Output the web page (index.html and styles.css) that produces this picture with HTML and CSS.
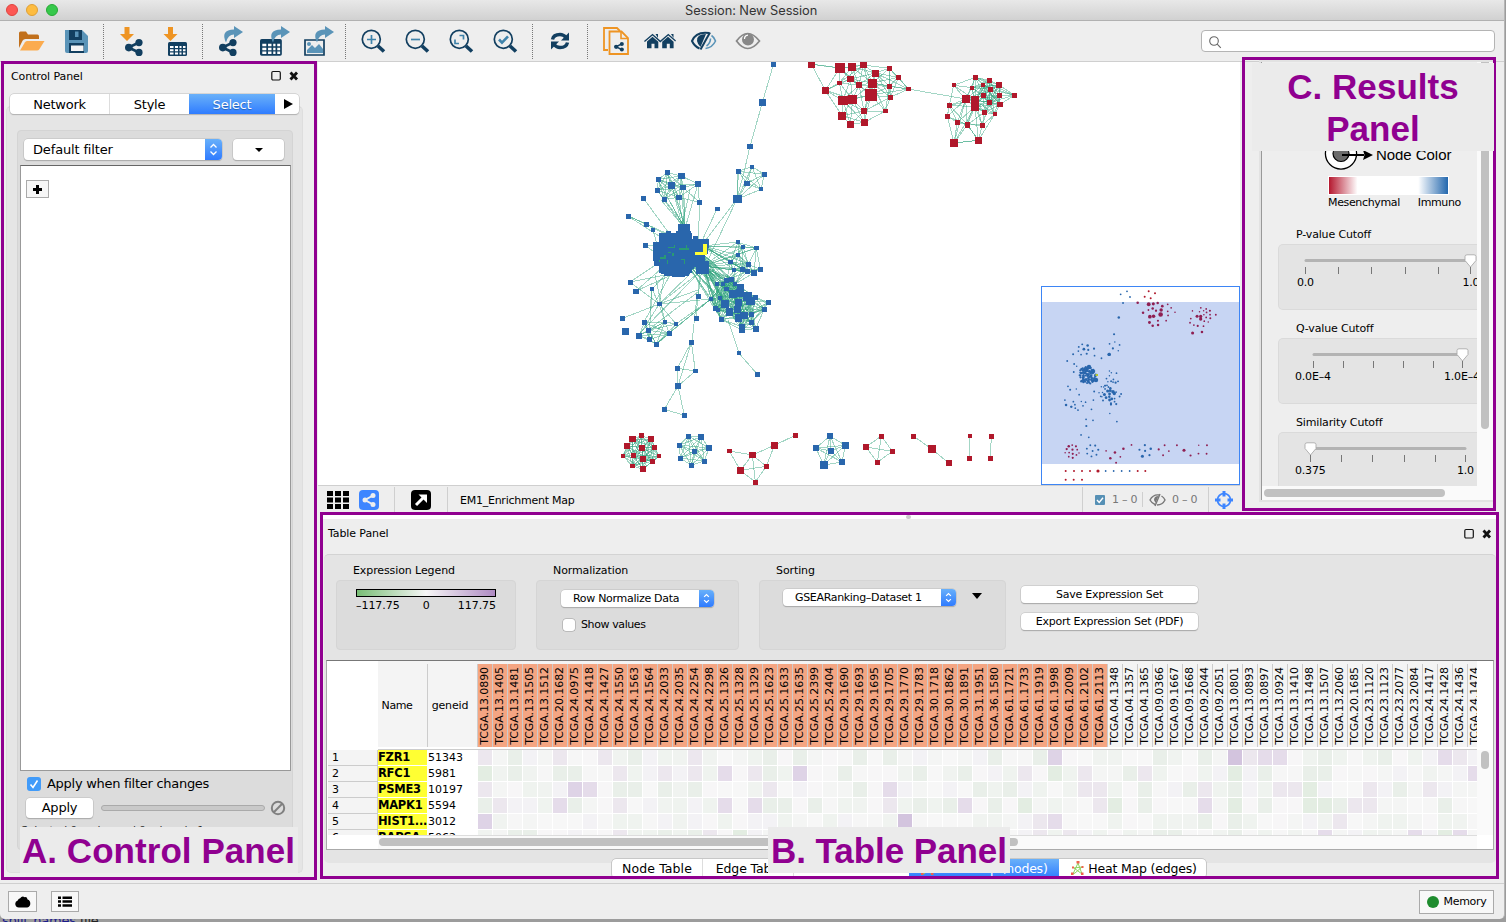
FILE: index.html
```html
<!DOCTYPE html>
<html lang="en">
<head>
<meta charset="utf-8">
<title>Session: New Session</title>
<link rel="stylesheet" href="styles.css">
</head>
<body>
<div class="window">
  <header class="titlebar">
    <i class="light red"></i><i class="light amber"></i><i class="light green"></i>
    <span class="title">Session: New Session</span>
  </header>

  <nav class="toolbar">
    <svg class="tool" viewBox="9 21 44 40"><path d="M19 48V33q0-1.500 1.500-1.500h5.500l2 3h9.500q1.500 0 1.500 2V39H25.500q-2 0-3 1.800z" fill="#c1701c"/><path d="M20 50.500l5-8.300q.8-1.200 2.400-1.200H44.500l-5.300 8.400q-.7 1.100-2.200 1.100z" fill="#fbab4e"/></svg>
    <svg class="tool" viewBox="54 21 44 40"><path d="M65 30h17l6 6v15q0 2-2 2H67q-2 0-2-2z" fill="#5a94b8"/><path d="M69 30h13v10H69zM69 43h15v10H69z" fill="#123f60"/><path d="M75 31.500h3.500V37H75z" fill="#5a94b8"/><path d="M71 45.500h12.500V51H71z" fill="#f5f5f5"/></svg>
    <i class="sep"></i>
    <svg class="tool" viewBox="109 21 44 40"><use href="#down" x="120" y="27"/><use href="#share" x="125" y="39"/></svg>
    <svg class="tool" viewBox="153 21 44 40"><use href="#down" x="163.500" y="27"/><use href="#grid" x="168" y="42"/></svg>
    <i class="sep"></i>
    <svg class="tool" viewBox="207 21 44 40"><use href="#share" x="218" y="39"/><use href="#curve" x="222" y="26"/></svg>
    <svg class="tool" viewBox="251 21 44 40"><use href="#grid" transform="translate(259 39) scale(1.150 1.200)"/><use href="#curve" x="269" y="26"/></svg>
    <svg class="tool" viewBox="295 21 44 40"><path d="M304 40h19v15h-19z" fill="#eee" stroke="#123f60" stroke-width="1.700"/><path d="M306 53v-3l5-5 3 3 4-4 4 5v4z" fill="#5a94b8"/><circle cx="308" cy="44" r="2" fill="#5a94b8"/><use href="#curve" x="313" y="26"/></svg>
    <i class="sep"></i>
    <svg class="tool" viewBox="351 21 44 40"><use href="#lens" x="361" y="29"/><path d="M367 39.500h9M371.500 35v9" class="lens-mark"/></svg>
    <svg class="tool" viewBox="395 21 44 40"><use href="#lens" x="405" y="29"/><path d="M411 39.500h9" class="lens-mark"/></svg>
    <svg class="tool" viewBox="439 21 44 40"><use href="#lens" x="449" y="29"/><path d="M459.500 35.500h4v4M459 43.500h-4v-4" class="lens-mark"/></svg>
    <svg class="tool" viewBox="483 21 44 40"><use href="#lens" x="493" y="29"/><path d="M499 39.500l3 3.200 6-6.400" class="lens-mark bold"/></svg>
    <i class="sep"></i>
    <svg class="tool" viewBox="538 21 44 40"><path d="M552.500 39.500q1-5 7.500-5 3.500 0 6 3" fill="none" stroke="#123f60" stroke-width="3.400"/><path d="M569 32.500v8h-8z" fill="#123f60"/><path d="M567.500 42.500q-1 5-7.500 5-3.500 0-6-3" fill="none" stroke="#123f60" stroke-width="3.400"/><path d="M551 49.500v-8h8z" fill="#123f60"/></svg>
    <i class="sep"></i>
    <svg class="tool" viewBox="592 21 44 40"><path d="M607 50h-4V28h13l3 3" fill="none" stroke="#ee9423" stroke-width="1.800"/><path d="M608.500 31.500h12l6.500 6.500v16h-18.500z" fill="#eee" stroke="#ee9423" stroke-width="1.800"/><path d="M620 32v6.500h7" fill="none" stroke="#ee9423" stroke-width="1.600"/><use href="#share" transform="translate(613 42) scale(.56)"/></svg>
    <svg class="tool" viewBox="636 21 44 40"><g fill="#123f60"><path d="M643 41l8.500-7.300 7.800 6.700 8-6.700 7.700 6.700-.8 1-6.900-5.800-8 6.800-7.800-6.800-7.600 6.400z"/><path d="M646 41.500l5.500-4.700 5.800 4.900v6.500h-3.800v-4.500h-3v4.500H646zM661.200 41.700l5.800-4.900 5.600 4.900v6.500h-3.800v-4.500h-3v4.500h-4.600zM654.500 34h2.500v4zM670 34h2.500v4z"/></g></svg>
    <svg class="tool" viewBox="680 21 44 40"><path d="M708 33q-13-1.800-17 8 2.500 5.500 7.500 7.500" fill="none" stroke="#123f60" stroke-width="2"/><path d="M705 34q-9.500 0-9 7 .5 3 3.500 6z" fill="#123f60"/><path d="M709 32.500l-9.500 17" stroke="#123f60" stroke-width="2"/><path d="M710.500 35.500q3 2 4 5.500-3 6.500-10 7.500M709.500 38.500q0 4.500-4 7.500" fill="none" stroke="#5a94b8" stroke-width="1.600"/></svg>
    <svg class="tool" viewBox="724 21 44 40"><path d="M735.500 41q11-15 23 0-12 15-23 0z" fill="none" stroke="#888" stroke-width="1.700"/><circle cx="747" cy="39.500" r="6" fill="#888"/><path d="M743.500 39q0-3.500 3.500-3.800" fill="none" stroke="#fff" stroke-width="1.200"/></svg>
    <div class="search"><svg width="14" height="14" viewBox="0 0 14 14"><circle cx="6" cy="6" r="4.300"/><path d="M9.200 9.200l3.600 3.600"/></svg></div>
  </nav>

  <div class="main">
    <section class="control">
      <div class="panel-title"><span>Control Panel</span><svg class="panel-icons" width="28" height="12" viewBox="0 0 28 12"><rect x=".8" y="1.500" width="8.500" height="8.500" rx="1.200"/><path d="M19.500 2.500l6.500 7M26 2.500l-6.500 7"/></svg></div>
      <div class="tabs">
        <span class="tab net">Network</span><span class="tab sty">Style</span><span class="tab sel">Select</span><span class="tab more"><i class="tri-right"></i></span>
      </div>
      <div class="control-outer">
        <div class="control-inner">
          <div class="filter-row">
            <div class="combo">Default filter<i class="steps"><svg viewBox="0 0 17 21"><path d="M5.500 8.500l3-3 3 3M5.500 12.500l3 3 3-3"/></svg></i></div>
            <div class="drop"><i class="tri-down small"></i></div>
          </div>
          <div class="filter-list"><span class="plus"></span></div>
          <div class="check-row"><span class="check on"><svg viewBox="0 0 14 14"><path d="M3.500 7.500l2.500 3 4.500-7"/></svg></span>Apply when filter changes</div>
          <div class="apply-row"><span class="apply">Apply</span><i class="progress"></i><svg width="16" height="16" viewBox="0 0 16 16"><circle cx="8" cy="8" r="6.200"/><path d="M3.800 12.200l8.400-8.400"/></svg></div>
          <div class="selected-info">Selected 0 nodes and 0 edges in 1ms</div>
        </div>
      </div>
    </section>

    <div class="right">
      <div class="upper">
        <section class="netview">
          <svg class="canvas" id="net" viewBox="318 62 922 423"></svg>
          <svg class="minimap" id="mini" viewBox="1041 286 199 199"></svg>
          <div class="netbar">
            <svg class="grid9" width="23" height="18" viewBox="0 0 23 18"><path d="M0 0h6v5H0zM8 0h6v5H8zM16 0h6v5h-6zM0 6.500h6v5H0zM8 6.500h6v5H8zM16 6.500h6v5h-6zM0 13h6v5H0zM8 13h6v5H8zM16 13h6v5h-6z"/></svg>
            <svg class="share-btn" width="20" height="20" viewBox="0 0 20 20"><rect width="20" height="20" rx="4" fill="#3d85ff"/><path d="M14 5.500L6 10l8 4.500" fill="none" stroke="#eee" stroke-width="2"/><g fill="#eee"><circle cx="14" cy="5.500" r="2.500"/><circle cx="6" cy="10" r="2.500"/><circle cx="14" cy="14.500" r="2.500"/></g></svg>
            <i class="bar-sep a"></i>
            <svg class="detach" width="20" height="20" viewBox="0 0 20 20"><rect width="20" height="20" rx="4"/><path d="M5 15l8-8" stroke="#fff" stroke-width="3"/><path d="M7.500 4.500h8.500v8.500z" fill="#fff"/></svg>
            <i class="bar-sep b"></i>
            <span class="netname">EM1_Enrichment Map</span>
            <i class="bar-sep c"></i>
            <span class="minicheck"><svg viewBox="0 0 10 10"><path d="M2 5l2.200 2.500L8 2.800"/></svg></span>
            <span class="count">1 – 0</span>
            <i class="bar-sep short"></i>
            <svg class="hidden-eye" width="17" height="14" viewBox="0 0 17 14"><path d="M10.500 2Q4 1 1 7q2 3.500 5 4.500M12.500 3q2.500 1.500 3.500 4-2.500 5-8 5M11 1L6 13" fill="none" stroke="#777" stroke-width="1.400"/><path d="M9.500 3Q5 3 5 7l1.500 3z" fill="#777"/></svg>
            <span class="count second">0 – 0</span>
            <i class="bar-sep d"></i>
            <svg class="target" width="20" height="20" viewBox="0 0 20 20"><circle cx="10" cy="10" r="6.500" fill="none" stroke="#3d85ff" stroke-width="1.700"/><path d="M10 1v5.500M10 13.500V19M1 10h5.500M13.500 10H19" stroke="#3d85ff" stroke-width="3"/></svg>
          </div>
        </section>

        <section class="results">
          <div class="results-pane">
            <div class="results-view">
              <div class="legend">
                <svg width="52" height="34" viewBox="1324 137 52 34"><circle cx="1341" cy="153.500" r="15.600" fill="#fff" stroke="#000" stroke-width="1.300"/><circle cx="1341" cy="153.500" r="8" fill="#6b6b6b" stroke="#000" stroke-width="1.200"/><path d="M1342 155h22" stroke="#000" stroke-width="2"/><path d="M1363 150l10 5-10 5 1.500-5z"/></svg><span class="node-color">Node Color</span>
              </div>
              <div class="ramp"></div>
              <div class="ramp-labels"><span>Mesenchymal</span><span>Immuno</span></div>
              <div class="cut"><h4>P-value Cutoff</h4><svg width="198" height="64" viewBox="1279 244 198 64"><path class="track" d="M1306 259.500h164"/><path class="ticks" d="M1305.500 266v7M1338.500 266v7M1371.500 266v7M1405.500 266v7M1438.500 266v7M1470.500 266v7"/><use href="#knob" x="1464" y="253"/><text x="1297" y="285">0.0</text><text x="1462.500" y="285">1.0</text></svg></div>
              <div class="cut"><h4>Q-value Cutoff</h4><svg width="198" height="64" viewBox="1279 244 198 64"><path class="track" d="M1314 259.500h148"/><path class="ticks" d="M1313.500 266v7M1343.500 266v7M1373.500 266v7M1403.500 266v7M1433.500 266v7M1462.500 266v7"/><use href="#knob" x="1456" y="253"/><text x="1295" y="285">0.0E–4</text><text x="1444" y="285">1.0E–4</text></svg></div>
              <div class="cut"><h4>Similarity Cutoff</h4><svg width="198" height="64" viewBox="1279 244 198 64"><path class="track" d="M1312 259.500h153"/><path class="ticks" d="M1310.500 266v7M1341.500 266v7M1372.500 266v7M1404.500 266v7M1435.500 266v7M1465.500 266v7"/><use href="#knob" x="1304" y="253"/><text x="1295" y="285">0.375</text><text x="1457" y="285">1.0</text></svg></div>
            </div>
            <div class="vscroll"><i></i></div>
            <div class="hscroll"><i></i></div>
          </div>
        </section>
      </div>

      <section class="table-panel">
        <div class="splitter"><i></i></div>
        <div class="panel-title wide"><span>Table Panel</span><svg class="panel-icons" width="28" height="12" viewBox="0 0 28 12"><rect x=".8" y="1.500" width="8.500" height="8.500" rx="1.200"/><path d="M19.500 2.500l6.500 7M26 2.500l-6.500 7"/></svg></div>
        <div class="table-outer">
          <div class="options">
            <div class="opt expr"><h4>Expression Legend</h4><div class="opt-box"><i class="expr-bar"></i><div class="expr-labels"><span>–117.75</span><span>0</span><span>117.75</span></div></div></div>
            <div class="opt norm"><h4>Normalization</h4><div class="opt-box"><div class="combo mini">Row Normalize Data<i class="steps"><svg viewBox="0 0 15 18"><path d="M5 7.300l2.500-2.500 2.500 2.500M5 10.700l2.500 2.500 2.500-2.500"/></svg></i></div><div class="show"><span class="check"></span>Show values</div></div></div>
            <div class="opt sort"><h4>Sorting</h4><div class="opt-box"><div class="combo mini">GSEARanking–Dataset 1<i class="steps"><svg viewBox="0 0 15 18"><path d="M5 7.300l2.500-2.500 2.500 2.500M5 10.700l2.500 2.500 2.500-2.500"/></svg></i></div><i class="tri-down"></i></div></div>
            <div class="exports"><span>Save Expression Set</span><span>Export Expression Set (PDF)</span></div>
          </div>
          <div class="grid">
            <div class="grid-view">
              <div class="grid-head" id="head"><span class="h-blank"></span><span class="h-name">Name</span><span class="h-gene">geneid</span></div>
              <div class="grid-body" id="rows"></div>
              <div class="grid-hscroll"><i></i></div>
            </div>
            <div class="grid-vscroll"><i></i></div>
          </div>
        </div>
        <div class="bottom-tabs">
          <span class="btab t1">Node Table</span><span class="btab t2">Edge Table</span><span class="btab t3">Network Table</span><span class="btab t4"><svg width="15" height="15"><use href="#heat"/></svg>Heat Map (nodes)</span><span class="btab t5"><svg width="15" height="15"><use href="#heat"/></svg>Heat Map (edges)</span>
        </div>
      </section>
    </div>
  </div>

  <footer class="status">
    <span class="sbtn cloud"><svg width="16" height="12" viewBox="0 0 16 12"><path d="M4 11.500a3.600 3.600 0 01-1.300-7Q3.300 2.500 5.200 2.200 7-.6 9.700 1.200q2.300-.5 2.900 2.300 2.700.8 2.700 4 0 3.200-3 4z"/></svg></span>
    <span class="sbtn list"><svg width="14" height="11" viewBox="0 0 14 11"><path d="M0 .5h3V3H0zM4.500.5H14V3H4.500zM0 4.300h3v2.500H0zM4.500 4.300H14v2.500H4.500zM0 8.200h3v2.500H0zM4.500 8.200H14v2.500H4.500z"/></svg></span>
    <span class="sbtn memory"><i></i>Memory</span>
  </footer>
</div>
<div class="behind"><span>split</span><span>names</span><span class="dark">.file</span></div>

<div class="frame fa"></div><div class="frame fb"></div><div class="frame fc"></div>
<div class="note na">A. Control Panel</div>
<div class="note nb">B. Table Panel</div>
<div class="note nc">C. Results<br>Panel</div>

<svg class="defs" width="0" height="0"><defs>
  <g id="down"><path d="M4.500 0h5v7h4.500L7 14 0 7h4.500z" fill="#ee9423"/></g>
  <g id="share" fill="#123f60"><path d="M14 3.500L3.500 8.500l10.500 5" fill="none" stroke="#123f60" stroke-width="2.600"/><circle cx="14" cy="3.600" r="3.600"/><circle cx="3.800" cy="8.600" r="3.800"/><circle cx="14" cy="13.400" r="3.600"/></g>
  <g id="grid"><rect width="19" height="14" rx="1.500" fill="#123f60"/><path d="M2 4h3.500v2H2zM7 4h3v2H7zM11.500 4h2v2h-2zM15 4h2.500v2H15zM2 7.300h3.500v2H2zM7 7.300h3v2H7zM11.500 7.300h2v2h-2zM15 7.300h2.500v2H15zM2 10.500h3.500v2H2zM7 10.500h3v2H7zM11.500 10.500h2v2h-2zM15 10.500h2.500v2H15z" fill="#fff"/></g>
  <g id="curve"><path d="M11 0l9 6-9 6V8.500Q5 8.500 3 16.500-3 4 11 3.500z" fill="#5a94b8"/></g>
  <g id="lens"><circle cx="10.300" cy="10.300" r="9" fill="none" stroke="#123f60" stroke-width="1.700"/><path d="M17 17l6 5.500" stroke="#123f60" stroke-width="3.600"/></g>
  <g id="knob"><path d="M1 2.500Q1 .8 3 .8h7q2 0 2 1.700v4L6.500 13 1 6.500z" fill="#fff" stroke="#aaa" stroke-width=".9"/></g>
  <g id="heat"><path d="M3 13L8 2l4 11L4 7l8-1-7 6z" fill="none" stroke="#8fd45e" stroke-width="1"/><path d="M6.500 0h3v2.500h-3zM1 11.500h2.500V14H1zM11 11.500h2.500V14H11zM2 5.500h2v2H2zM11.500 5h2v2h-2z" fill="#f0624d"/></g>
</defs></svg>
<script src="app.js"></script>
</body>
</html>
```

FILE: app.js
```js
const NS = 'http://www.w3.org/2000/svg';
const BLUE = '#2966ac', RED = '#b0182b';

function el(parent, name, attrs) {
  const e = document.createElementNS(NS, name);
  for (const k in attrs) e.setAttribute(k, attrs[k]);
  parent.appendChild(e);
  return e;
}

let seed = 7;
function rnd() { seed = (seed * 16807) % 2147483647; return seed / 2147483647; }

// Node groups: origin, colour, nodes as x, y, size in thirds of a pixel.
// "near" links all pairs closer than the given distance; "links" are explicit.
const groups = [
  { o: [610, 60], c: BLUE, near: 0, n: [[490,14,15],[457,128,20],[420,259,17],[382,417,26]], links: [[0,1],[1,2]] },
  { o: [610, 60], c: BLUE, near: 120, n: [[385,334,14],[426,320,12],[463,343,14],[411,370,17],[453,388,12],[382,417,26]] },
  { o: [610, 60], c: BLUE, near: 95, n: [[172,338,15],[214,348,20],[145,358,15],[185,376,22],[219,382,17],[264,372,17],[142,391,14],[163,418,14],[207,412,17],[268,427,14]] },
  { o: [610, 60], c: BLUE, near: 0, n: [[101,415,16],[55,468,15],[109,492,15],[129,510,12],[322,447,14],[106,555,15]], links: [[1,2]] },
  { o: [610, 230], c: BLUE, near: 75, n: [[384,37,12],[399,50,12],[439,54,14],[384,74,12],[361,96,14],[415,103,14],[372,121,12],[397,117,15],[412,124,14],[432,128,18],[451,118,15],[350,151,14],[376,162,12]] },
  { o: [610, 230], c: BLUE, near: 85, n: [[321,161,12],[339,163,12],[350,151,14],[365,149,14],[350,177,14],[376,162,12],[391,172,20],[370,193,24],[390,190,24],[412,200,28],[330,205,12],[345,221,24],[358,246,22],[385,217,22],[422,213,26],[436,202,14],[475,217,15],[463,237,15],[316,235,14],[325,239,12],[334,268,15],[383,238,20],[385,264,22],[402,256,22],[424,253,14],[424,277,14],[396,290,17],[396,300,17],[437,296,17],[303,207,12]] },
  { o: [610, 230], c: BLUE, near: 0, n: [[265,198,15],[259,265,14],[61,157,14],[78,184,16],[126,177,12],[148,222,14],[37,265,14],[46,304,20],[87,317,17],[198,282,12]], links: [[5,6],[5,8],[5,9]] },
  { o: [610, 230], c: BLUE, near: 92, n: [[87,317,17],[103,277,14],[115,301,14],[118,328,14],[139,343,15],[165,276,12],[198,282,12],[178,310,14]] },
  { o: [610, 230], c: BLUE, near: 0, n: [[244,337,14],[202,415,14],[256,423,14],[204,468,17],[163,538,14],[223,556,14],[387,370,12],[442,433,14]], links: [[0,1],[0,2],[0,3],[1,2],[1,3],[2,3],[3,4],[3,5],[4,5],[6,7]] },
  { o: [800, 60], c: RED, near: 95, n: [[34,13,20],[120,24,30],[156,21,24],[190,15,20],[226,39,21],[268,25,14],[295,52,14],[151,57,20],[118,69,14],[177,75,18],[217,69,27],[268,79,14],[325,87,13],[76,91,20],[213,105,36],[129,121,29],[158,118,28],[271,112,14],[256,153,14],[192,153,17],[126,167,23],[151,193,20],[193,187,20]], links: [[10,12],[14,12],[4,12]] },
  { o: [800, 60], c: RED, near: 82, n: [[526,52,14],[568,61,14],[597,75,17],[461,76,12],[516,83,12],[548,75,12],[571,88,14],[550,106,13],[598,106,14],[643,106,15],[497,118,24],[525,120,26],[525,140,26],[568,127,14],[600,133,16],[448,136,14],[553,157,14],[584,163,12],[442,169,14],[472,187,14],[502,194,17],[547,196,14],[462,249,24],[535,241,20]], links: [[12,22],[12,23],[10,22],[22,23],[17,23],[18,22],[20,23],[0,9],[5,9],[5,13],[5,14]] },
  { o: [610, 420], c: RED, near: 95, n: [[94,47,14],[67,57,20],[123,57,17],[51,78,18],[96,83,18],[133,83,14],[39,108,12],[70,106,14],[147,109,12],[98,116,17],[127,124,14],[67,138,14],[98,147,17]] },
  { o: [610, 420], c: BLUE, near: 100, n: [[235,48,15],[273,51,17],[208,75,15],[297,84,17],[253,93,15],[211,114,15],[283,123,15],[244,136,15]] },
  { o: [610, 420], c: RED, near: 0, n: [[358,93,13],[427,105,20],[493,76,20],[556,46,14],[391,151,20],[469,139,14],[436,186,15]], links: [[0,1],[0,4],[1,2],[2,3],[1,4],[1,5],[1,6],[4,5],[4,6],[5,6],[2,5]] },
  { o: [610, 420], c: BLUE, near: 140, n: [[660,48,17],[618,84,17],[706,76,20],[662,93,17],[641,135,24],[696,126,17]] },
  { o: [610, 420], c: RED, near: 100, n: [[814,48,15],[768,81,17],[847,94,14],[802,127,15]] },
  { o: [610, 420], c: RED, near: 0, n: [[910,48,15],[965,87,24],[1016,129,17],[1080,48,11],[1078,114,15],[1144,48,15],[1141,115,15]], links: [[0,1],[1,2],[3,4],[5,6]] }
];

// Long edges between groups, in page pixels.
const far = [
  [750,146,745,168],[745,168,737,199],[738,172,737,199],[737,199,702,245],[737,199,707,262],[717,209,700,245],[700,203,698,240],[698,184,686,225],
  [644,199,668,232],[628,216,668,234],[628,216,662,238],[646,224,668,236],[653,230,657,244],[645,245,660,245],[645,245,658,255],
  [659,304,630,282],[659,304,690,274],[659,304,665,274],[659,304,652,289],[659,304,711,299],[659,304,698,290],[659,304,700,272],
  [630,282,660,262],[630,282,670,274],[636,291,662,268],[636,291,700,262],[652,289,668,272],[652,289,650,310],[644,322,670,275],
  [649,338,652,290],[648,330,698,292],[676,324,711,299],[669,333,711,299],[656,344,711,299],[665,322,659,304],[698,296,703,262],[692,342,697,296],
  [728,320,739,353],[908,89,966,99],[811,64,840,68],[665,322,655,275],[696,318,700,270],[638,335,700,272]
];
for (let i = 0; i < 13; i++) far.push([682 + (i % 4), 225, [657,658,664,667,672,679,681,683,661,670,676,684,690][i], [190,180,199,173,186,198,176,188,200,202,195,199,190][i]]);
const target = [[738,242],[743,247],[756,248],[738,255],[730,262],[748,264],[734,270],[742,269],[747,271],[754,273]];
target.forEach(t => { far.push([703, 246, t[0], t[1]], [703, 266, t[0], t[1]]); });
const lower = [[717,284],[723,284],[727,280],[732,279],[740,287],[735,295],[711,299],[720,298],[725,304],[738,302],[730,312],[716,308],[748,296],[721,319]];
lower.forEach(t => { far.push([704, 266, t[0], t[1]], [686, 262, t[0], t[1]], [698, 250, t[0], t[1]]); });

const net = document.getElementById('net');
const edges = el(net, 'g', { class: 'edges' });
const nodes = el(net, 'g', { class: 'nodes' });
const all = [];
far.forEach(f => el(edges, 'line', { x1: f[0], y1: f[1], x2: f[2], y2: f[3] }));
groups.forEach(g => {
  const p = g.n.map(n => [g.o[0] + n[0] / 3, g.o[1] + n[1] / 3, n[2] / 3]);
  const line = (a, b) => el(edges, 'line', { x1: p[a][0], y1: p[a][1], x2: p[b][0], y2: p[b][1] });
  for (let i = 0; i < p.length; i++)
    for (let j = i + 1; j < p.length; j++)
      if (Math.hypot(p[i][0] - p[j][0], p[i][1] - p[j][1]) * 3 < g.near) line(i, j);
  (g.links || []).forEach(l => line(l[0], l[1]));
  p.forEach(q => {
    el(nodes, 'rect', { x: q[0] - q[2] / 2, y: q[1] - q[2] / 2, width: q[2], height: q[2], fill: g.c });
    all.push([q[0], q[1], q[2], g.c]);
  });
});
[[678,224,12,10],[676,231,15,8],[659,233,33,40],[653,242,12,19],[654,257,10,9],[666,231,5,5],[661,262,29,12],[664,271,25,5],[672,273,13,4],[690,239,19,9],[693,236,5,5],[688,242,9,25],[685,262,9,7],[696,248,12,6],[696,255,9,10],[696,261,13,13]]
  .forEach(r => el(nodes, 'rect', { x: r[0], y: r[1], width: r[2], height: r[3], fill: BLUE }));
[[668,247,6,1],[664,255,2,4],[660,257,5,2],[679,248,10,2],[686,245,1,5],[674,245,1,3],[681,259,4,1],[667,260,1,4],[672,253,2,3],[684,259,1,5],[659,260,1,2],[668,252,3,1]]
  .forEach(r => el(nodes, 'rect', { x: r[0], y: r[1], width: r[2], height: r[3], fill: '#2a9a74' }));
[[703,244,4,11],[695,252,12,3]].forEach(r => el(nodes, 'rect', { x: r[0], y: r[1], width: r[2], height: r[3], fill: '#ffff33' }));

// Overview map
const mini = document.getElementById('mini');
el(mini, 'rect', { x: 1041, y: 286, width: 199, height: 199, fill: '#fff' });
el(mini, 'rect', { x: 1041, y: 302, width: 199, height: 162, fill: '#c7d5f3' });
all.forEach(n => el(mini, 'circle', { cx: 825.3 + n[0] * .385, cy: 278.2 + n[1] * .383, r: n[2] * .19, fill: n[3] === RED ? '#8f1f52' : BLUE }));
for (let i = 0; i < 110; i++) {
  const a = rnd() * 6.283, r = Math.sqrt(rnd()) * 8.8;
  el(mini, 'circle', { cx: 1087 + r * Math.cos(a), cy: 375.5 + r * Math.sin(a), r: 1.1, fill: BLUE });
}
el(mini, 'circle', { cx: 1089, cy: 367, r: 2.2, fill: BLUE });
el(mini, 'circle', { cx: 1096, cy: 380, r: 2.2, fill: BLUE });
el(mini, 'rect', { x: 1095.5, y: 374, width: 2.5, height: 2, fill: '#b7c72e' });
[[257,43,2],[276,34,2],[285,51,2]].forEach(d => el(mini, 'circle', { cx: 1035 + d[0] / 3, cy: 280 + d[1] / 3, r: .9, fill: BLUE }));
[[341,34],[360,40],[329,50],[347,55],[92,573],[117,573],[141,573],[165,573],[189,573],[308,573],[331,573],[92,599],[116,599],[141,599]]
  .forEach((d, i) => el(mini, 'circle', { cx: 1035 + d[0] / 3, cy: 280 + d[1] / 3, r: i === 8 ? 1.6 : 1, fill: RED }));
[[212,573],[236,573],[260,573],[284,573]].forEach(d => el(mini, 'circle', { cx: 1035 + d[0] / 3, cy: 280 + d[1] / 3, r: .9, fill: BLUE }));
el(mini, 'rect', { x: 1041.5, y: 286.5, width: 198, height: 198, fill: 'none', stroke: '#3d85f5' });

// Table
const samples = ('13.0890 13.1405 13.1481 13.1505 13.1512 20.1682 24.0975 24.1418 24.1427 24.1550 24.1563 24.1564 24.2033 24.2035 24.2254 24.2298 25.1326 25.1328 25.1329 25.1623 25.1633 25.1635 25.2399 25.2404 29.1690 29.1693 29.1695 29.1705 29.1770 29.1783 30.1718 30.1862 30.1891 31.1951 36.1580 61.1721 61.1733 61.1919 61.1998 61.2009 61.2102 61.2113 ' +
  '04.1348 04.1357 04.1365 09.0366 09.1667 09.1668 09.2044 09.2051 13.0801 13.0893 13.0897 13.0924 13.1410 13.1498 13.1507 13.2060 20.1685 23.1120 23.1123 23.2077 23.2084 24.1417 24.1428 24.1436 24.1474').split(' ');
const head = document.getElementById('head');
samples.forEach((s, i) => {
  const c = document.createElement('span');
  c.className = i < 42 ? 'sample hot' : 'sample';
  const t = document.createElement('b');
  t.textContent = 'TCGA.' + s;
  c.appendChild(t);
  head.appendChild(c);
});

const shade = { g: '#e9efe9', G: '#e3ede2', p: '#ece7ee', q: '#e5dcea', P: '#ded3e6', X: '#d3c4de' };
const faint = ['#f7f7f7', '#f4f5f4', '#f0f3f0', '#f6f6f6', '#f3f2f5', '#eff3ef', '#f7f6f7'];
const rows = [
  ['FZR1', '51343', '0p 2g 5p 8p 10g 14p 19g 21g 25g 27g 34g 37g 38P 45g 48g 50X 51p 52q 53q 56g 60g 64q 65p'],
  ['RFC1', '5981', '0G 2g 5g 6g 9p 12p 14p 16q 18p 19g 21P 24g 29g 32g 36p 38G 40p 43g 44p 50G 52g 55g 56g 66q'],
  ['PSME3', '10197', '0p 6P 7q 9g 10g 12g 14g 19p 25g 27q 33g 35g 40p 41p 44g 47g 48p 50g 53p 54p 55G 59p 61g 63p'],
  ['MAPK1', '5594', '0g 1p 5q 6g 9p 16q 18q 19g 20g 22g 27p 29g 31g 32q 34g 36G 41p 42G 44g 48q 50G 52g 55G 56G 57g 58p 59p 64g'],
  ['HIST1...', '3012', '0P 28X 37p 38q 48g 50g 57p'],
  ['RAPSA', '5062', '2g 3g 9p 12g 14g 15p 17G 28g 29g 37p 39p 45g 46g 50g 56q 62q 64G 65q']
];
const body = document.getElementById('rows');
rows.forEach((r, k) => {
  const row = document.createElement('div');
  row.className = 'row';
  row.innerHTML = '<span class="num">' + (k + 1) + '</span><span class="gene">' + r[0] + '</span><span class="gid">' + r[1] + '</span>';
  const set = {};
  r[2].split(' ').forEach(v => { set[parseInt(v)] = v.slice(-1); });
  for (let i = 0; i < 67; i++) {
    const c = document.createElement('i');
    c.style.background = set[i] ? shade[set[i]] : faint[Math.floor(rnd() * faint.length)];
    row.appendChild(c);
  }
  body.appendChild(row);
});
```

FILE: styles.css
```css
* { box-sizing: border-box; }
body { margin: 0; width: 1506px; height: 922px; overflow: hidden; position: relative; background: #9c9c9c; font: 11px "DejaVu Sans", sans-serif; letter-spacing: -.22px; color: #000; }
svg { display: block; flex: none; }
i, b { font-style: normal; font-weight: normal; }
h4 { margin: 0; font-size: 11px; font-weight: normal; letter-spacing: -.1px; }
.defs { position: absolute; }

.window { width: 1505px; height: 919px; display: flex; flex-direction: column; background: #eee; border-right: 1px solid #b5b5b5; border-radius: 0 0 5px 5px; overflow: hidden; }
.titlebar { height: 21px; flex: none; display: flex; align-items: center; gap: 8px; padding-left: 6px; background: linear-gradient(#e8e8e8, #d1d1d1); border-bottom: 1px solid #b1b1b1; }
.light { width: 12px; height: 12px; border-radius: 50%; border: 1px solid #e0443e; background: #fc5753; }
.light.amber { background: #fdbc40; border-color: #dfa035; }
.light.green { background: #36c84b; border-color: #27aa35; }
.title { flex: 1; padding: 1px 0 0 619px; font: 12.8px/20px Inter, sans-serif; color: #333; letter-spacing: -.05px; white-space: nowrap; }

.toolbar { height: 41px; flex: none; display: flex; align-items: center; padding-left: 9px; border-bottom: 1px solid #cfcfcf; }
.tool { width: 44px; height: 40px; flex: none; }
.tool:nth-child(2) { margin-left: 1px; }
.sep { height: 35px; margin: 0 5px; border-left: 1px dotted #777; }
.lens-mark { fill: none; stroke: #3f83ab; stroke-width: 1.7; }
.lens-mark.bold { stroke-width: 2.6; }
.search { margin-left: auto; margin-right: 9px; width: 294px; height: 22px; border: 1px solid #b4b4b4; border-radius: 4px; background: #fff; padding: 4px 6px; }
.search svg { fill: none; stroke: #666; stroke-width: 1.1; }

.main { flex: none; height: 821px; display: flex; }
.control { width: 318px; padding: 4px 15px 10px 6px; display: flex; flex-direction: column; }
.panel-title { height: 21px; display: flex; align-items: center; justify-content: space-between; padding: 0 4px 0 5px; letter-spacing: -.1px; }
.panel-icons { fill: none; stroke: #111; stroke-width: 1.2; }
.panel-icons path { stroke-width: 2.8; }
.tabs { display: flex; height: 21px; margin: 7px 4px 0 4px; border-radius: 4px; background: #fff; box-shadow: 0 0 0 .5px #bbb, 0 1px 1px #aaa; font-size: 13px; position: relative; }
.tab { display: flex; align-items: center; justify-content: center; padding-top: 1px; }
.net { width: 100px; border-right: 1px solid #ddd; }
.sty { width: 79px; }
.sel { width: 86px; background: linear-gradient(#6ab1f9, #2f7cff); color: #fff; text-shadow: 0 1px 1px #2561b0; }
.more { flex: 1; }
.tri-right { border-left: 9px solid #000; border-top: 5px solid transparent; border-bottom: 5px solid transparent; margin-left: 3px; }
.tri-down { border-top: 6px solid #000; border-left: 5px solid transparent; border-right: 5px solid transparent; }
.tri-down.small { border-width: 4px 4px 0; }
.control-outer { flex: 1; margin-top: -8px; padding: 23px 9px 22px 10px; background: #e5e5e5; border: 1px solid #dedede; border-top-color: #d5d5d5; border-radius: 5px; }
.control-inner { height: 720px; background: #dcdcdc; border: 1px solid #d4d4d4; border-radius: 4px; padding: 8px 1px 0 2px; overflow: hidden; }
.filter-row { display: flex; gap: 11px; padding-left: 4px; }
.combo, .drop, .apply, .exports span { background: #fff; border-radius: 4px; box-shadow: 0 0 0 .5px #bbb, 0 1px 1px #999; }
.combo { width: 198px; height: 21px; display: flex; align-items: center; padding-left: 9px; font-size: 13px; overflow: hidden; white-space: nowrap; letter-spacing: -.15px; }
.steps { margin-left: auto; width: 17px; height: 100%; background: linear-gradient(#68b0fa, #2f7bff); }
.steps svg { width: 100%; height: 100%; fill: none; stroke: #fff; stroke-width: 1.3; }
.drop { width: 51px; height: 21px; display: flex; align-items: center; justify-content: center; }
.filter-list { width: 271px; height: 606px; margin-top: 5px; background: #fff; border: 1px solid #999; border-top-color: #666; padding: 14px 5px; }
.plus { display: block; width: 23px; height: 18px; border: 1px solid #aaa; background: linear-gradient(#000, #000) center/9px 3px no-repeat, linear-gradient(#000, #000) center/3px 9px no-repeat, #f6f6f6; }
.check-row { display: flex; align-items: center; gap: 6px; height: 15px; margin: 5px 0 0 7px; font-size: 13px; letter-spacing: -.28px; }
.check { width: 14px; height: 14px; border-radius: 3px; background: #fff; box-shadow: 0 0 0 .5px #999; }
.check.on { background: #419bf9; box-shadow: none; }
.check svg { fill: none; stroke: #fff; stroke-width: 1.6; }
.apply-row { display: flex; align-items: center; margin: 7px 0 0 6px; }
.apply { width: 67px; height: 20px; font-size: 13px; line-height: 20px; text-align: center; }
.progress { width: 164px; height: 6px; margin: 0 5px 0 8px; border: 1px solid #aaa; border-radius: 3px; background: #c9c9c9; }
.apply-row svg { fill: none; stroke: #808080; stroke-width: 2; }
.selected-info { margin-top: 6px; padding-left: 1px; line-height: 14px; white-space: nowrap; color: #333; }

.right { flex: 1; display: flex; flex-direction: column; min-width: 0; }
.upper { height: 450px; display: flex; }
.netview { width: 922px; position: relative; background: #fff; }
.canvas { width: 922px; height: 423px; }
.edges line { stroke: #2a9f78; stroke-opacity: .43; stroke-width: 1; shape-rendering: crispEdges; }
.nodes rect { shape-rendering: crispEdges; }
.minimap { position: absolute; left: 723px; top: 224px; width: 199px; height: 199px; }
.netbar { height: 27px; display: flex; align-items: center; padding: 1px 0 0 9px; background: #eee; border-top: 1px solid #cfcfcf; }
.netname { letter-spacing: -.25px; padding-top: 1px; }
.share-btn { margin-left: 9px; }
.bar-sep { height: 26px; border-left: 1px solid #cfcfcf; }
.bar-sep.a { margin: 0 16px 0 15px; }
.bar-sep.b { margin: 0 12px 0 16px; }
.bar-sep.c { margin: 0 12px 0 auto; }
.bar-sep.d { margin: 0 5px 0 11px; }
.bar-sep.short { height: 15px; margin: 0 6px 0 5px; }
.minicheck { width: 10px; height: 10px; background: #5690b5; border-radius: 1px; }
.minicheck svg { fill: none; stroke: #fff; stroke-width: 1.4; }
.count { margin-left: 7px; color: #777; width: 25px; white-space: nowrap; letter-spacing: -.25px; }
.count.second { margin-left: 6px; }
.target { margin-right: 6px; }

.results { flex: 1; padding: 0 12px 12px 21px; }
.results-pane { height: 438px; display: grid; grid-template: 424px 14px / 215px 17px; border: solid #999; border-width: 0 0 1px 1px; background: #eee; outline: 2px solid #e2e2e2; }
.results-view { overflow: hidden; padding: 75px 0 0 17px; }
.legend { display: flex; align-items: center; margin-left: 45px; height: 34px; }
.node-color { font: 15px "Liberation Sans", sans-serif; letter-spacing: -.05px; white-space: nowrap; }
.ramp { width: 121px; height: 19px; margin: 5px 0 0 49px; border: 1px solid #fff; background: linear-gradient(90deg, #b5182f, #fff 24%, #fff 75%, #2468ae); }
.ramp-labels { display: flex; justify-content: space-between; width: 133px; margin: 1px 0 15px 49px; height: 14px; line-height: 14px; letter-spacing: -.35px; }
.cut { height: 94px; }
.cut h4 { height: 20px; line-height: 20px; padding-left: 17px; letter-spacing: -.15px; }
.cut > svg { background: #e4e4e4; border-radius: 4px 0 0 4px; box-shadow: 0 0 0 1px #dadada; }
.track { stroke: #b3b3b3; stroke-width: 3; stroke-linecap: round; }
.ticks { stroke: #777; }
.cut text { font: 11px "DejaVu Sans", sans-serif; letter-spacing: -.2px; }
.vscroll { background: #fafafa; padding-left: 4px; }
.vscroll i { display: block; width: 8px; height: 367px; border-radius: 0 0 4px 4px; background: #c1c1c1; }
.hscroll { grid-column: 1 / 3; background: #fafafa; padding: 3px 0 0 2px; }
.hscroll i { display: block; width: 181px; height: 8px; border-radius: 4px; background: #c1c1c1; }

.table-panel { height: 371px; padding-left: 5px; display: flex; flex-direction: column; }
.splitter { height: 4px; margin-top: 3px; margin-right: 8px; background: #fff; padding-left: 583px; }
.splitter i { display: block; width: 5px; height: 4px; background: #ccc; border-radius: 2px; }
.panel-title.wide { height: 29px; margin-right: 8px; }
.table-outer { height: 309px; margin: 6px 8px 0 1px; padding: 0 3px 0 2px; background: #e4e4e4; border-top: 1px solid #d3d3d3; border-radius: 5px; }
.options { display: flex; height: 105px; padding: 7px 0 0 10px; }
.opt h4 { height: 18px; line-height: 17px; padding-left: 17px; }
.opt-box { height: 70px; background: #dcdcdc; border: 1px solid #d5d5d5; border-radius: 4px; }
.expr { width: 180px; }
.norm { width: 203px; margin-left: 20px; }
.sort { width: 247px; margin-left: 20px; }
.expr .opt-box { padding: 8px 19px; }
.expr-bar { display: block; height: 8px; border: 1px solid #000; background: linear-gradient(90deg, #78bd75, #f6f6f6, #af8bc3); }
.expr-labels { display: flex; justify-content: space-between; margin-top: 2px; letter-spacing: -.05px; }
.expr-labels span:nth-child(2) { margin-left: -5px; }
.norm .opt-box { padding: 9px 24px; }
.sort .opt-box { padding: 8px 23px; display: flex; align-items: flex-start; }
.sort .tri-down { margin: 4px 0 0 16px; }
.combo.mini { width: 153px; height: 17px; font-size: 11px; padding-left: 12px; letter-spacing: -.3px; }
.sort .combo.mini { width: 173px; letter-spacing: -.33px; }
.mini .steps { width: 15px; }
.show { display: flex; align-items: center; gap: 6px; margin: 11px 0 0 2px; letter-spacing: -.4px; }
.show .check { width: 12px; height: 12px; }
.exports { margin: 24px 0 0 15px; display: flex; flex-direction: column; gap: 10px; }
.exports span { width: 177px; height: 17px; line-height: 18px; text-align: center; letter-spacing: -.25px; }

.grid { height: 190px; width: 1168px; display: flex; border: 1px solid #aaa; border-top-color: #777; background: #fff; }
.grid-view { width: 1150px; overflow: hidden; padding-left: 1px; }
.grid-head { width: 1160px; height: 86px; padding-top: 3px; display: flex; background: #f4f4f4; }
.grid-head > span { flex: none; }
.h-blank { width: 50px; margin-top: -3px; background: #fff; height: 89px; }
.h-name, .h-gene { width: 50px; line-height: 83px; height: 83px; text-align: center; border-right: 1px solid #ccc; padding-right: 11px; letter-spacing: -.4px; }
.h-gene { padding-right: 5px; letter-spacing: -.15px; }
.sample { width: 15px; height: 83px; border-right: 1px solid #ccc; display: flex; align-items: center; justify-content: center; }
.hot { background: #f4a582; }
.sample b { writing-mode: vertical-rl; transform: rotate(180deg); line-height: 14px; font-size: 11px; letter-spacing: -.07px; }
.grid-body { height: 86px; border-top: 1px solid #ccc; overflow: hidden; margin-top: 2px; letter-spacing: 0; }
.row { width: 1160px; height: 16px; display: flex; }
.row > * { flex: none; }
.row i { width: 14px; height: 15px; margin-right: 1px; }
.num { width: 50px; height: 16px; line-height: 15px; padding-left: 4px; background: #f4f4f4; border-bottom: 1px solid #ccc; border-right: 1px solid #ccc; }
.gene { width: 49px; height: 15px; line-height: 15px; background: #ffff33; font-weight: bold; font-size: 11.5px; letter-spacing: -.25px; white-space: nowrap; overflow: hidden; }
.gid { width: 51px; padding-left: 1px; line-height: 15px; }
.grid-hscroll { height: 14px; margin-left: 50px; background: #fafafa; padding: 2px 0 0 1px; border-top: 1px solid #ddd; }
.grid-hscroll i { display: block; width: 639px; height: 8px; border-radius: 4px; background: #c1c1c1; }
.grid-vscroll { width: 16px; margin: 89px 0 14px; background: #fafafa; padding: 1px 0 0 4px; }
.grid-vscroll i { display: block; width: 8px; height: 18px; border-radius: 4px; background: #c1c1c1; }
.bottom-tabs { position: relative; width: 594px; height: 19px; margin: -4px 0 0 289px; display: flex; background: #fff; border-radius: 4px; box-shadow: 0 0 0 .5px #aaa, 0 1px 1px #999; font-size: 12.5px; white-space: nowrap; }
.btab { display: flex; align-items: center; justify-content: center; letter-spacing: -.12px; }
.t1 { width: 91px; border-right: 1px solid #ddd; letter-spacing: .1px; }
.t2 { width: 91px; border-right: 1px solid #ddd; padding-left: 2px; }
.t3 { width: 115px; }
.t4 { width: 150px; background: linear-gradient(#6ab1f9, #2f7cff); color: #fff; gap: 4px; letter-spacing: -.2px; }
.t5 { flex: 1; gap: 3px; letter-spacing: -.2px; padding-left: 2px; }

.status { flex: 1; border-top: 1px solid #cfcfcf; display: flex; align-items: center; padding: 0 10px 0 8px; gap: 14px; }
.sbtn { height: 21px; border: 1px solid #aaa; background: #f8f8f8; display: flex; align-items: center; justify-content: center; }
.cloud { width: 29px; }
.list { width: 28px; }
.memory { width: 75px; height: 24px; margin-left: auto; gap: 5px; letter-spacing: -.3px; }
.memory i { width: 12px; height: 12px; border-radius: 50%; background: #1f8c2e; }
.behind { height: 3px; overflow: hidden; padding-left: 2px; color: #1a1a8c; font-size: 13px; line-height: 3px; display: flex; gap: 5px; }
.behind .dark { color: #222; margin-left: -5px; }

.frame { position: absolute; border: 3px solid #900090; }
.fa { left: 1px; top: 61px; width: 316px; height: 819px; }
.fb { left: 320px; top: 512px; width: 1179px; height: 367px; }
.fc { left: 1242px; top: 57px; width: 254px; height: 454px; }
.note { position: absolute; background: #ebebeb; color: #900090; font: bold 35px/46px "Liberation Sans", sans-serif; letter-spacing: .05px; white-space: nowrap; text-align: center; }
.na { left: 20px; top: 827px; width: 278px; height: 46px; padding: 1px 1px 0 0; }
.nb { left: 768px; top: 827px; width: 242px; height: 46px; padding-top: 1px; letter-spacing: -.05px; }
.nc { left: 1252px; top: 63px; width: 242px; height: 88px; padding: 3px 0 0 0; line-height: 42px; }
```
